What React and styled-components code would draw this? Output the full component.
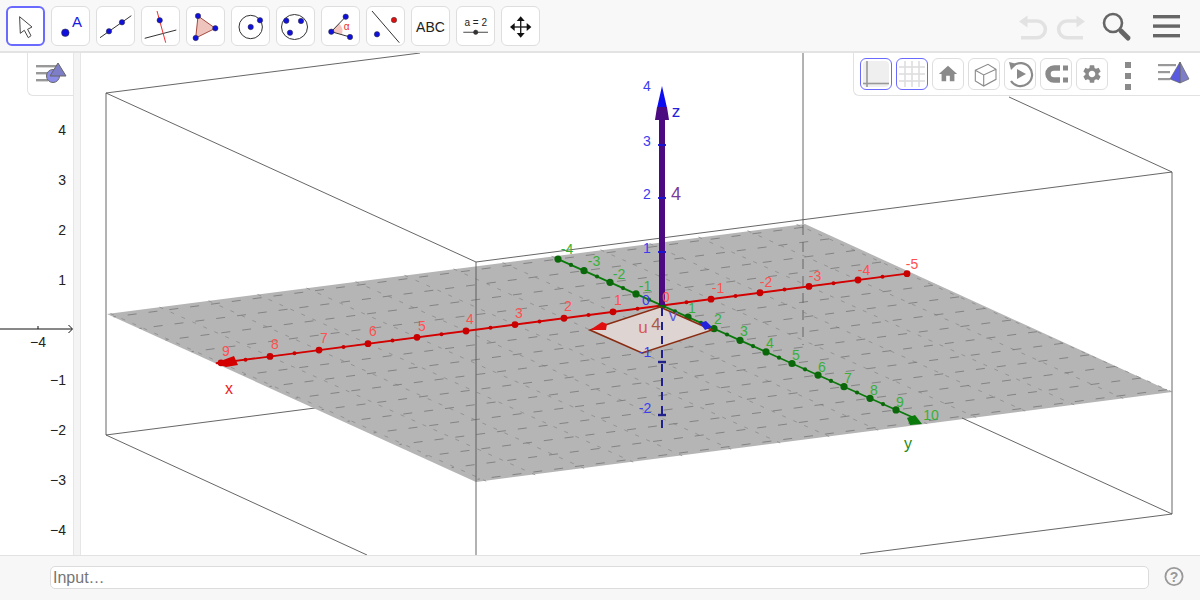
import React from 'react';
import styled, { createGlobalStyle } from 'styled-components';
import { MdHome, MdSettings } from 'react-icons/md';

const GlobalStyle = createGlobalStyle`
  html, body {
    margin: 0;
    padding: 0;
    background: #fff;
    font-family: "Liberation Sans", Arial, sans-serif;
  }
`;

const AppFrame = styled.div`
  width: 1200px;
  height: 600px;
  display: flex;
  flex-direction: column;
  overflow: hidden;
`;

const ToolBar = styled.div`
  height: 53px;
  box-sizing: border-box;
  flex: none;
  display: flex;
  align-items: flex-start;
  justify-content: space-between;
  padding: 6px 19px 0 6px;
  background: #f8f8f8;
  border-bottom: 2px solid #e3e3e3;
`;

const ToolGroup = styled.div`
  display: flex;
  gap: 6px;
`;

const ToolButton = styled.div`
  width: 39px;
  height: 40px;
  box-sizing: border-box;
  background: #fff;
  border: ${(p) => (p.$active ? '2px solid #6a6aff' : '1px solid #dedede')};
  border-radius: 6px;
  display: flex;
  align-items: center;
  justify-content: center;
`;

const ToolIcon = styled.svg`
  width: 39px;
  height: 39px;
  flex: none;
`;

const ToolText = styled.text`
  font-family: "Liberation Sans", Arial, sans-serif;
  font-size: ${(p) => p.$size || 14}px;
  font-weight: ${(p) => (p.$bold ? 700 : 400)};
  fill: ${(p) => p.$color || '#222'};
  text-anchor: middle;
`;

const ActionGroup = styled.div`
  display: flex;
  align-items: center;
  gap: 6px;
  height: 40px;
`;

const ActionIcon = styled.svg`
  width: ${(p) => p.$w}px;
  height: 40px;
  flex: none;
  margin-left: ${(p) => p.$gap || 0}px;
`;

const MainRow = styled.div`
  flex: 1;
  display: flex;
  min-height: 0;
`;

const AlgebraPanel = styled.div`
  position: relative;
  width: 73px;
  flex: none;
  background: #fff;
`;

const PanelSvg = styled.svg`
  display: block;
  width: 100%;
  height: 100%;
`;

const AxisNumber = styled.text`
  font-family: "Liberation Sans", Arial, sans-serif;
  font-size: 14px;
  fill: #222;
  text-anchor: ${(p) => p.$anchor || 'end'};
`;

const StyleToggle = styled.div`
  position: absolute;
  top: 0;
  right: 0;
  width: 46px;
  height: 43px;
  box-sizing: border-box;
  background: #fff;
  border-left: 1px solid #e2e2e2;
  border-bottom: 1px solid #e2e2e2;
  border-bottom-left-radius: 6px;
  display: flex;
  align-items: center;
  justify-content: center;
`;

const Divider = styled.div`
  width: 8px;
  flex: none;
  box-sizing: border-box;
  background: #f4f4f4;
  border-left: 1px solid #e6e6e6;
  border-right: 1px solid #e6e6e6;
`;

const GraphicsPanel = styled.div`
  position: relative;
  flex: 1;
  background: #fff;
`;

const Label = styled.text`
  font-family: "Liberation Sans", Arial, sans-serif;
  font-size: ${(p) => p.$size || 14}px;
  fill: ${(p) => p.$color};
  text-anchor: middle;
`;

const StyleBar = styled.div`
  position: absolute;
  top: 0;
  right: 0;
  width: 347px;
  height: 43px;
  box-sizing: border-box;
  padding: 5px 0 0 6px;
  display: flex;
  gap: 4px;
  background: #fff;
  border-left: 1px solid #e2e2e2;
  border-bottom: 1px solid #e2e2e2;
  border-bottom-left-radius: 6px;
`;

const StyleButton = styled.div`
  width: 32px;
  height: 32px;
  box-sizing: border-box;
  border: 1px solid ${(p) => (p.$active ? '#6a6aff' : '#dedede')};
  border-radius: 6px;
  background: #fff;
  display: flex;
  align-items: center;
  justify-content: center;
  color: #8a8a8a;
  font-size: 22px;
`;

const StyleIcon = styled.svg`
  width: ${(p) => p.$w || 30}px;
  height: 30px;
  flex: none;
`;

const MoreDots = styled.div`
  width: 6px;
  margin: 4px 23px 0 13px;
  display: flex;
  flex-direction: column;
  gap: 5px;
`;

const MoreDot = styled.span`
  width: 6px;
  height: 6px;
  background: #8a8a8a;
`;

const InputBar = styled.div`
  height: 45px;
  flex: none;
  box-sizing: border-box;
  display: flex;
  align-items: flex-start;
  padding: 10px 16px 0 50px;
  gap: 15px;
  background: #f7f7f7;
  border-top: 1px solid #e2e2e2;
`;

const InputBox = styled.div`
  flex: 1;
  height: 23px;
  box-sizing: border-box;
  background: #fff;
  border: 1px solid #dcdcdc;
  border-radius: 5px;
  padding: 0 2px;
  font-size: 16px;
  line-height: 21px;
  color: #757575;
`;

const HelpIcon = styled.svg`
  width: 20px;
  height: 20px;
  flex: none;
`;

const Dot = ({ x, y, r = 2.7, fill = '#1010dc' }) => (
  <circle cx={x} cy={y} r={r} fill={fill} stroke="#333" strokeWidth="0.5" />
);

const TOOLS = [
  <>
    <polygon points="13.6,9.7 14.3,26.3 18.3,23.3 22.3,30.7 25,28.7 21.6,22.3 26,20" fill="#fff" stroke="#444" strokeWidth="1" />
  </>,
  <>
    <Dot x={14.3} y={25.7} r={3.8} />
    <ToolText x={26} y={19.7} $size={15} $color="#1a1ae0">A</ToolText>
  </>,
  <>
    <line x1="4" y1="30.7" x2="35.3" y2="8.7" stroke="#333" />
    <Dot x={13} y={24.3} />
    <Dot x={26} y={15.3} />
  </>,
  <>
    <line x1="3.7" y1="31.3" x2="35.3" y2="23" stroke="#333" />
    <line x1="16" y1="4" x2="24.7" y2="35.7" stroke="#f03030" />
    <Dot x={18.7} y={13.3} />
  </>,
  <>
    <polygon points="12,9 29.3,21.3 9.7,31" fill="#eec4bc" stroke="#a04a40" />
    <Dot x={12} y={9} />
    <Dot x={29.3} y={21.3} />
    <Dot x={9.7} y={31} />
  </>,
  <>
    <circle cx="19.7" cy="20" r="11.7" fill="none" stroke="#333" />
    <Dot x={19.7} y={20} />
    <Dot x={29} y={13.3} />
  </>,
  <>
    <ellipse cx="18.5" cy="20" rx="13" ry="12.5" fill="none" stroke="#333" />
    <Dot x={10.3} y={13.7} />
    <Dot x={14} y={25.7} />
    <Dot x={25} y={14} />
  </>,
  <>
    <path d="M10.3 24.7 L18 16.5 A11 11 0 0 1 21 27.5 Z" fill="#f5c6c0" />
    <line x1="10.3" y1="24.7" x2="24.7" y2="9.7" stroke="#333" />
    <line x1="10.3" y1="24.7" x2="29" y2="30" stroke="#333" />
    <Dot x={10.3} y={24.7} />
    <Dot x={24.7} y={9.7} />
    <Dot x={29} y={30} />
    <ToolText x={25.7} y={23} $size={10} $color="#e83030">α</ToolText>
  </>,
  <>
    <line x1="6" y1="4" x2="33.3" y2="35.7" stroke="#333" />
    <Dot x={11} y={27.3} />
    <Dot x={28} y={13} fill="#e01010" />
  </>,
  <ToolText x={19.5} y={25} $size={14}>ABC</ToolText>,
  <>
    <ToolText x={19.7} y={19} $size={10}>a = 2</ToolText>
    <line x1="7.3" y1="25.3" x2="32" y2="25.3" stroke="#666" strokeWidth="1.2" />
    <Dot x={19.7} y={25.3} r={2.2} fill="#333" />
  </>,
  <>
    <line x1="19.7" y1="11" x2="19.7" y2="29" stroke="#222" strokeWidth="1.4" />
    <line x1="10.7" y1="20" x2="28.7" y2="20" stroke="#222" strokeWidth="1.4" />
    <polygon points="19.7,9.3 15.7,14 23.7,14" fill="#111" />
    <polygon points="19.7,30.7 15.7,26 23.7,26" fill="#111" />
    <polygon points="9,20 13.7,16 13.7,24" fill="#111" />
    <polygon points="30.4,20 25.7,16 25.7,24" fill="#111" />
  </>,
];

const origin = [662, 305.5];
const unitX = [-49, 6.37];
const unitY = [26, 11.6];
const project = (a, b) => [
  origin[0] + a * unitX[0] + b * unitY[0],
  origin[1] + a * unitX[1] + b * unitY[1],
];
const range = (from, to, step = 1) => {
  const out = [];
  for (let v = from; v <= to + 0.001; v += step) out.push(v);
  return out;
};

const X_LABELS = [
  [9, 226, 356], [8, 275, 349], [7, 324, 343], [6, 373, 336], [5, 422, 331],
  [4, 470, 324], [3, 519, 318], [2, 568, 311], [1, 618, 305], [0, 666, 302],
  [-1, 718, 293], [-2, 766, 287], [-3, 815, 281], [-4, 864, 275], [-5, 912, 269],
];
const Y_LABELS = [
  [-4, 567, 254], [-3, 594, 266], [-2, 619, 279], [-1, 645, 291],
  [1, 692, 313], [2, 718, 324], [3, 744, 336], [4, 770, 348], [5, 796, 360],
  [6, 822, 372], [7, 848, 383], [8, 874, 395], [9, 900, 407], [10, 931, 420],
];
const Z_LABELS = [
  [4, 647, 91], [3, 647, 146], [2, 647, 199], [1, 647, 253], [0, 646, 305],
  [-1, 645, 357], [-2, 645, 413],
];

const minus = (n) => (n < 0 ? `-${-n}` : `${n}`);

const GridLines = () => (
  <>
    <g stroke="#8c8c8c" strokeWidth="0.8" strokeDasharray="4 8">
      {range(-5, 9).map((a) => {
        const [x1, y1] = project(a, -4.25);
        const [x2, y2] = project(a, 10.2);
        return <line key={a} x1={x1} y1={y1} x2={x2} y2={y2} />;
      })}
    </g>
    <g stroke="#767676" strokeWidth="0.8" strokeDasharray="9 12">
      {range(-4, 10).map((b) => {
        const [x1, y1] = project(-5, b);
        const [x2, y2] = project(9.07, b);
        return <line key={b} x1={x1} y1={y1} x2={x2} y2={y2} />;
      })}
    </g>
  </>
);

const Scene = () => {
  const xEnd = project(-5, 0);
  const xStart = project(9.1, 0);
  const yStart = project(0, -4);
  const yEnd = project(0, 9.7);
  return (
    <PanelSvg viewBox="81 53 1119 502">
      <g stroke="#555" strokeWidth="0.9" fill="none">
        <line x1="106" y1="93" x2="420" y2="53" />
        <line x1="106" y1="93" x2="106" y2="435" />
        <line x1="106" y1="93" x2="476" y2="262" />
        <line x1="476" y1="262" x2="1172" y2="172" />
        <line x1="1172" y1="172" x2="1172" y2="514" />
        <line x1="1172" y1="172" x2="1009" y2="97" />
        <line x1="803" y1="53" x2="803" y2="225" />
        <line x1="106" y1="435" x2="803" y2="345" />
      </g>
      <polygon points="107,314 805,224 1172,392 476,482" fill="#b5b5b5" />
      <GridLines />
      <line x1="803" y1="225" x2="803" y2="345" stroke="#5e5e5e" strokeWidth="0.9" strokeDasharray="10 7" />
      <g stroke="#555" strokeWidth="0.9" fill="none">
        <line x1="476" y1="262" x2="476" y2="555" />
        <line x1="106" y1="435" x2="367" y2="555" />
        <line x1="962" y1="418" x2="1172" y2="514" />
        <line x1="1172" y1="514" x2="860" y2="554" />
      </g>

      <line x1={xStart[0]} y1={xStart[1]} x2={xEnd[0]} y2={xEnd[1]} stroke="#d40000" strokeWidth="1.8" />
      {range(-5, 9, 0.5).map((a) => {
        const [x, y] = project(a, 0);
        return <circle key={a} cx={x} cy={y} r={Number.isInteger(a) ? 3.4 : 2} fill="#c80000" />;
      })}
      <polygon points="215,363 234,356 238,365 226,367" fill="#d40000" />

      <line x1={yStart[0]} y1={yStart[1]} x2={yEnd[0]} y2={yEnd[1]} stroke="#0a7a0a" strokeWidth="1.8" />
      {range(-4, 9, 0.5).map((b) => {
        const [x, y] = project(0, b);
        return <circle key={b} cx={x} cy={y} r={Number.isInteger(b) ? 3.6 : 2.1} fill="#0a680a" />;
      })}
      <polygon points="907,418 915,415 922,424 910,425" fill="#0a7a0a" />

      <polygon points="590,330 660,307 712,330 642,353" fill="#ded4d2" stroke="#8a2c12" strokeWidth="1.6" />
      <polygon points="590,330 602,322 607,324 606,330" fill="#e01010" />
      <polygon points="700,323 706,321 712,327 705,330" fill="#2222dd" />

      <line x1="662" y1="308" x2="662" y2="428" stroke="#20208a" strokeWidth="2" strokeDasharray="8 6" />
      {[362, 415].map((y) => (
        <line key={y} x1="658" y1={y} x2="666" y2={y} stroke="#20208a" strokeWidth="2.4" />
      ))}
      <polygon points="662,86 657,108 667,108" fill="#0c0cf0" />
      <rect x="659" y="110" width="6" height="195" fill="#4c0a80" />
      <polygon points="657,107 667,107 669,120 655,120" fill="#4c0a80" />
      {[145, 198, 252].map((y) => (
        <line key={y} x1="658" y1={y} x2="666" y2={y} stroke="#1414d8" strokeWidth="1.8" />
      ))}

      {X_LABELS.map(([n, x, y]) => (
        <Label key={n} x={x} y={y} $color="#ff5050">{minus(n)}</Label>
      ))}
      {Y_LABELS.map(([n, x, y]) => (
        <Label key={n} x={x} y={y} $color="#38b038">{minus(n)}</Label>
      ))}
      {Z_LABELS.map(([n, x, y]) => (
        <Label key={n} x={x} y={y} $color="#3c3cf0">{minus(n)}</Label>
      ))}
      <Label x={229} y={394} $size={16} $color="#ee2020">x</Label>
      <Label x={908} y={449} $size={16} $color="#1c8a1c">y</Label>
      <Label x={676} y={117} $size={17} $color="#2222dd">z</Label>
      <Label x={676} y={200} $size={18} $color="#7a3a98">4</Label>
      <Label x={643} y={333} $size={17} $color="#d85858">u</Label>
      <Label x={656} y={330} $size={17} $color="#a85a48">4</Label>
      <Label x={673} y={321} $size={17} $color="#6060e0">v</Label>
    </PanelSvg>
  );
};

const AlgebraGraph = () => (
  <PanelSvg viewBox="0 53 73 502">
    <line x1="0" y1="329" x2="72" y2="329" stroke="#111" strokeWidth="1" />
    <path d="M68.5 325 L72.5 329 L68.5 333" fill="none" stroke="#111" />
    <line x1="38" y1="326" x2="38" y2="329" stroke="#111" />
    <AxisNumber x={38} y={347} $anchor="middle">−4</AxisNumber>
    {[[4, 135], [3, 185], [2, 235], [1, 285], [-1, 385], [-2, 435], [-3, 485], [-4, 535]].map(([n, y]) => (
      <AxisNumber key={n} x={66} y={y}>{n < 0 ? `−${-n}` : n}</AxisNumber>
    ))}
  </PanelSvg>
);

const App = () => (
  <AppFrame>
    <GlobalStyle />
    <ToolBar>
      <ToolGroup>
        {TOOLS.map((icon, i) => (
          <ToolButton key={i} $active={i === 0}>
            <ToolIcon viewBox="0 0 39 39">{icon}</ToolIcon>
          </ToolButton>
        ))}
      </ToolGroup>
      <ActionGroup>
        <ActionIcon $w={32} viewBox="0 0 32 40">
          <path d="M10 15 H20 A8.3 8.3 0 0 1 20 31.7 H4" fill="none" stroke="#e2e2e2" strokeWidth="3.6" />
          <polygon points="2,15.5 10.5,9.5 10.5,21.5" fill="#e2e2e2" />
        </ActionIcon>
        <ActionIcon $w={32} viewBox="0 0 32 40">
          <path d="M22 15 H12 A8.3 8.3 0 0 0 12 31.7 H28" fill="none" stroke="#e2e2e2" strokeWidth="3.6" />
          <polygon points="30,15.5 21.5,9.5 21.5,21.5" fill="#e2e2e2" />
        </ActionIcon>
        <ActionIcon $w={32} $gap={8} viewBox="0 0 32 40">
          <circle cx="12" cy="17" r="9" fill="none" stroke="#666" strokeWidth="2.6" />
          <line x1="20" y1="25" x2="27" y2="32" stroke="#666" strokeWidth="5" strokeLinecap="round" />
        </ActionIcon>
        <ActionIcon $w={28} $gap={14} viewBox="0 0 28 40">
          <rect x="0" y="9" width="27" height="3.4" fill="#666" />
          <rect x="0" y="18.4" width="27" height="3.4" fill="#666" />
          <rect x="0" y="28" width="27" height="3.4" fill="#666" />
        </ActionIcon>
      </ActionGroup>
    </ToolBar>

    <MainRow>
      <AlgebraPanel>
        <AlgebraGraph />
        <StyleToggle>
          <StyleIcon $w={32} viewBox="0 0 30 30">
            <rect x="0" y="6" width="20" height="2.4" fill="#999" />
            <rect x="0" y="13" width="12" height="2.4" fill="#999" />
            <rect x="0" y="20" width="12" height="2.4" fill="#999" />
            <circle cx="17" cy="17" r="6.5" fill="#8b8be8" stroke="#666" />
            <polygon points="22,4 30,17 14,17" fill="#7e7ec8" stroke="#666" />
          </StyleIcon>
        </StyleToggle>
      </AlgebraPanel>
      <Divider />
      <GraphicsPanel>
        <Scene />
        <StyleBar>
          <StyleButton $active>
            <StyleIcon viewBox="0 0 30 30">
              <rect x="2" y="2" width="26" height="26" rx="4" fill="#efefef" />
              <line x1="6" y1="2" x2="6" y2="28" stroke="#999" strokeWidth="1.6" />
              <line x1="2" y1="24.5" x2="28" y2="24.5" stroke="#999" strokeWidth="1.6" />
            </StyleIcon>
          </StyleButton>
          <StyleButton $active>
            <StyleIcon viewBox="0 0 30 30">
              <g stroke="#dedede" strokeWidth="1.6">
                <line x1="8" y1="2" x2="8" y2="28" />
                <line x1="15" y1="2" x2="15" y2="28" />
                <line x1="22" y1="2" x2="22" y2="28" />
                <line x1="2" y1="8" x2="28" y2="8" />
                <line x1="2" y1="15" x2="28" y2="15" />
                <line x1="2" y1="22" x2="28" y2="22" />
              </g>
            </StyleIcon>
          </StyleButton>
          <StyleButton><MdHome /></StyleButton>
          <StyleButton>
            <StyleIcon viewBox="0 0 30 30">
              <path d="M6.3 11.3 L19 5.3 L27 10.3 L27 20.3 L14.7 27 L6.3 22 Z M6.3 11.3 L14.7 16 L27 10.3 M14.7 16 L14.7 27" fill="none" stroke="#8a8a8a" strokeWidth="1.1" />
            </StyleIcon>
          </StyleButton>
          <StyleButton>
            <StyleIcon viewBox="0 0 30 30">
              <path d="M8 7 A11.5 11.5 0 1 1 6 22" fill="none" stroke="#8a8a8a" strokeWidth="2.2" />
              <polygon points="4,3 12,5 6,11" fill="#8a8a8a" />
              <polygon points="12,10 21,15 12,20" fill="#8a8a8a" />
            </StyleIcon>
          </StyleButton>
          <StyleButton>
            <StyleIcon viewBox="0 0 30 30">
              <path d="M19 9 H13 A6 6 0 0 0 13 21 H19" fill="none" stroke="#8a8a8a" strokeWidth="5.4" />
              <rect x="22" y="6.5" width="5" height="5" fill="#8a8a8a" />
              <rect x="22" y="18.5" width="5" height="5" fill="#8a8a8a" />
            </StyleIcon>
          </StyleButton>
          <StyleButton><MdSettings /></StyleButton>
          <MoreDots>
            <MoreDot />
            <MoreDot />
            <MoreDot />
          </MoreDots>
          <StyleIcon $w={32} viewBox="0 0 32 30">
            <rect x="0" y="6" width="18" height="2.2" fill="#999" />
            <rect x="0" y="13" width="12" height="2.2" fill="#999" />
            <rect x="0" y="20" width="12" height="2.2" fill="#999" />
            <polygon points="22,4 31,21 22,25" fill="#7e7ec8" stroke="#666" strokeWidth="0.7" />
            <polygon points="22,4 12,21 22,25" fill="#5a5ae0" stroke="#666" strokeWidth="0.7" />
          </StyleIcon>
        </StyleBar>
      </GraphicsPanel>
    </MainRow>

    <InputBar>
      <InputBox>Input…</InputBox>
      <HelpIcon viewBox="0 0 20 20">
        <circle cx="10" cy="10.5" r="8.6" fill="none" stroke="#999" strokeWidth="1.8" />
        <ToolText x={10} y={15.5} $size={14} $bold $color="#999">?</ToolText>
      </HelpIcon>
    </InputBar>
  </AppFrame>
);

export default App;
